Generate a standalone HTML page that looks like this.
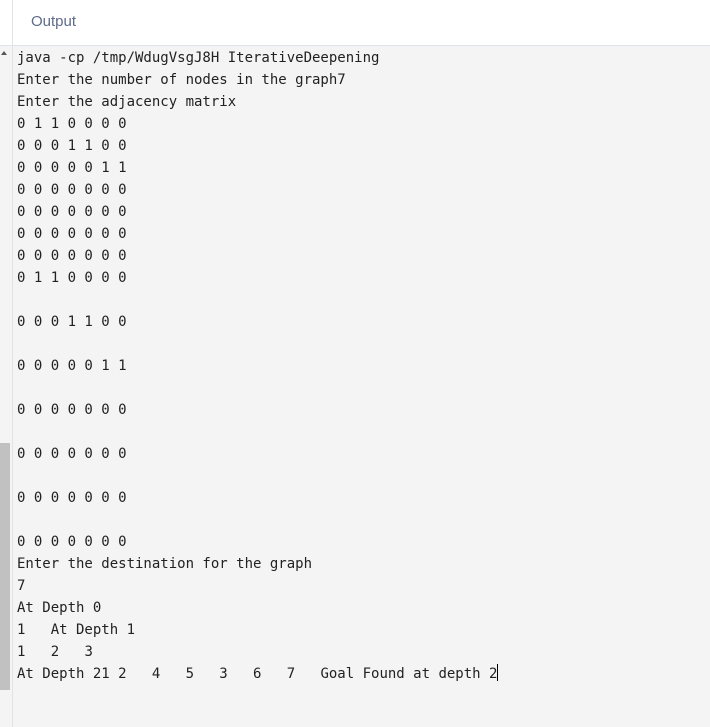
<!DOCTYPE html>
<html><head><meta charset="utf-8"><style>
html,body{margin:0;padding:0;width:710px;height:727px;overflow:hidden;background:#f4f4f4;}
.hdr{position:absolute;left:0;top:0;width:710px;height:45px;background:#fff;border-bottom:1px solid #dfe3ea;}
.hdr span{position:absolute;left:31px;top:13px;font:15px "Liberation Sans",sans-serif;color:#5f6b8a;}
.vl{position:absolute;left:12px;top:0;width:1px;height:727px;background:#dfe3ea;}
.sb{position:absolute;left:0;top:443px;width:10px;height:247px;background:#c1c1c1;}
.arr{position:absolute;left:1px;top:51px;width:0;height:0;border-left:3.5px solid transparent;border-right:3.5px solid transparent;border-bottom:4px solid #555;}
pre{position:absolute;left:17px;top:47px;margin:0;font:14px "DejaVu Sans Mono",monospace;line-height:22px;color:#222;tab-size:4;-moz-tab-size:4;}
.cur{display:inline-block;width:1px;height:17px;background:#000;vertical-align:-3px;}
</style></head><body>
<div class="hdr"><span>Output</span></div>
<div class="vl"></div>
<div class="sb"></div>
<div class="arr"></div>
<pre>java -cp /tmp/WdugVsgJ8H IterativeDeepening
Enter the number of nodes in the graph7
Enter the adjacency matrix
0 1 1 0 0 0 0
0 0 0 1 1 0 0
0 0 0 0 0 1 1
0 0 0 0 0 0 0
0 0 0 0 0 0 0
0 0 0 0 0 0 0
0 0 0 0 0 0 0
0 1 1 0 0 0 0

0 0 0 1 1 0 0

0 0 0 0 0 1 1

0 0 0 0 0 0 0

0 0 0 0 0 0 0

0 0 0 0 0 0 0

0 0 0 0 0 0 0
Enter the destination for the graph
7
At Depth 0
1	At Depth 1
1	2	3
At Depth 21 2	4	5	3	6	7	Goal Found at depth 2<span class="cur"></span></pre>
</body></html>
